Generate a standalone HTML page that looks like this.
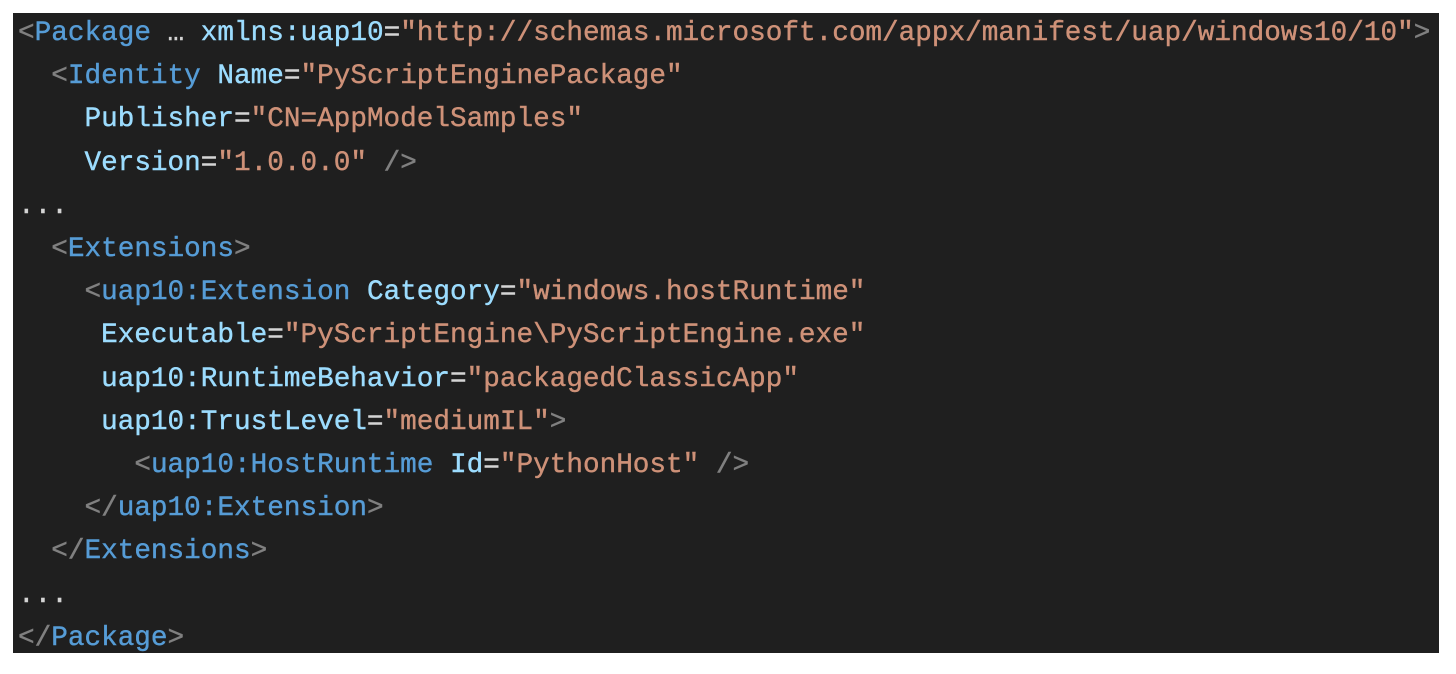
<!DOCTYPE html>
<html><head><meta charset="utf-8"><style>
html,body{margin:0;padding:0;background:#fff;width:1456px;height:674px;overflow:hidden}
.box{position:absolute;left:13px;top:13px;width:1426px;height:640px;background:#1f1f1f;overflow:hidden}
pre{position:absolute;left:5px;top:-1px;margin:0;font-family:"Liberation Mono",monospace;font-size:27.7px;line-height:43.2px;color:#d4d4d4;white-space:pre;-webkit-text-stroke:0.4px currentColor}
.p{color:#808080}.t{color:#569cd6}.a{color:#9cdcfe}.s{color:#ce9178}
</style></head><body><div class="box"><pre><span class="p">&lt;</span><span class="t">Package</span> … <span class="a">xmlns:uap10</span>=<span class="s">"http://schemas.microsoft.com/appx/manifest/uap/windows10/10"</span><span class="p">&gt;</span>
  <span class="p">&lt;</span><span class="t">Identity</span> <span class="a">Name</span>=<span class="s">"PyScriptEnginePackage"</span>
    <span class="a">Publisher</span>=<span class="s">"CN=AppModelSamples"</span>
    <span class="a">Version</span>=<span class="s">"1.0.0.0"</span> <span class="p">/&gt;</span>
...
  <span class="p">&lt;</span><span class="t">Extensions</span><span class="p">&gt;</span>
    <span class="p">&lt;</span><span class="t">uap10:Extension</span> <span class="a">Category</span>=<span class="s">"windows.hostRuntime"</span>
     <span class="a">Executable</span>=<span class="s">"PyScriptEngine\PyScriptEngine.exe"</span>
     <span class="a">uap10:RuntimeBehavior</span>=<span class="s">"packagedClassicApp"</span>
     <span class="a">uap10:TrustLevel</span>=<span class="s">"mediumIL"</span><span class="p">&gt;</span>
       <span class="p">&lt;</span><span class="t">uap10:HostRuntime</span> <span class="a">Id</span>=<span class="s">"PythonHost"</span> <span class="p">/&gt;</span>
    <span class="p">&lt;/</span><span class="t">uap10:Extension</span><span class="p">&gt;</span>
  <span class="p">&lt;/</span><span class="t">Extensions</span><span class="p">&gt;</span>
...
<span class="p">&lt;/</span><span class="t">Package</span><span class="p">&gt;</span></pre></div></body></html>
